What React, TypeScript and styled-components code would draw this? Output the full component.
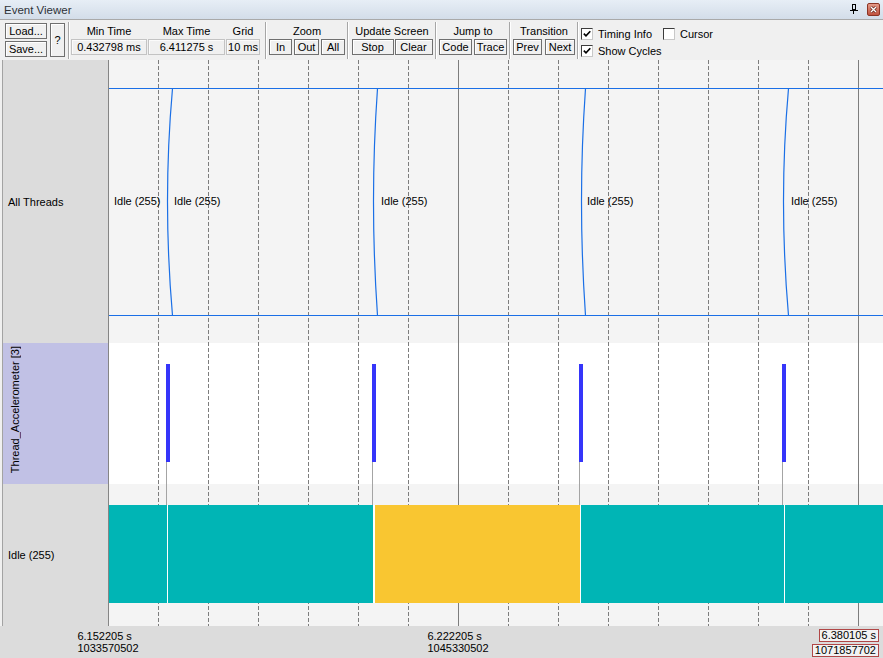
import React from "react";
import styled, { createGlobalStyle } from "styled-components";

const GlobalStyle = createGlobalStyle`
  html, body { margin: 0; padding: 0; background: #f0f0f0; }
  body { font-family: "Liberation Sans", Arial, sans-serif; font-size: 11px; color: #000; }
  #root { width: 883px; height: 658px; overflow: hidden; }
`;

const Window = styled.div`
  width: 883px;
  height: 658px;
  display: flex;
  flex-direction: column;
  background: #f0f0f0;
  overflow: hidden;
`;

/* ---------- Title bar ---------- */
const TitleBar = styled.div`
  flex: none;
  height: 19px;
  display: flex;
  align-items: center;
  padding: 0 3px 0 4px;
  background: linear-gradient(#e7eef6, #d3dde9);
`;
const Title = styled.span`
  font-size: 11.5px;
  color: #2e3238;
  flex: 1;
`;
const PinIcon = styled.svg`
  width: 8px;
  height: 10px;
  margin-right: 9px;
  margin-top: -2px;
`;
const CloseBox = styled.div`
  width: 13px;
  height: 13px;
  box-sizing: border-box;
  border: 1px solid #8c3424;
  border-radius: 2px;
  background: linear-gradient(#e49a88, #c0523f);
  display: flex;
  align-items: center;
  justify-content: center;
`;

/* ---------- Toolbar ---------- */
const Toolbar = styled.div`
  flex: none;
  height: 40px;
  border-top: 1px solid #a9a9a9;
  display: flex;
  align-items: flex-start;
  padding-left: 5px;
`;
const Stack = styled.div`
  display: flex;
  flex-direction: column;
  gap: 2px;
  margin-top: 3px;
`;
const Btn = styled.button<{ $w: number; $h?: number }>`
  box-sizing: border-box;
  width: ${(p) => p.$w}px;
  height: ${(p) => p.$h ?? 16}px;
  margin: 0;
  padding: 0;
  border: 1px solid #6f6f6f;
  box-shadow: inset 1px 1px 0 #ffffff;
  background: #f0f0f0;
  font-family: "Liberation Sans", Arial, sans-serif;
  font-size: 11px;
  color: #000;
  display: flex;
  align-items: center;
  justify-content: center;
  line-height: 1;
`;
const HelpBtn = styled(Btn)`
  margin: 3px 0 0 3px;
`;
const Separator = styled.div<{ $ml?: number }>`
  flex: none;
  width: 0;
  height: 37px;
  margin-top: 2px;
  margin-left: ${(p) => p.$ml ?? 0}px;
  border-left: 1px solid #a6a6a6;
  border-right: 1px solid #ffffff;
`;
const Group = styled.div<{ $w: number }>`
  flex: none;
  width: ${(p) => p.$w}px;
  padding-top: 4px;
  display: flex;
  flex-direction: column;
  align-items: center;
`;
const GroupLabel = styled.div`
  height: 15px;
  line-height: 15px;
  white-space: nowrap;
`;
const BtnRow = styled.div<{ $gap: number }>`
  display: flex;
  gap: ${(p) => p.$gap}px;
`;
const TimeGrid = styled.div`
  flex: none;
  width: 195px;
  padding: 4px 0 0 1px;
  box-sizing: border-box;
  display: grid;
  grid-template-columns: 76px 77px 34px;
  column-gap: 1px;
  grid-template-rows: 15px 16px;
  justify-items: center;
`;
const ValueBox = styled.div`
  box-sizing: border-box;
  width: 100%;
  height: 16px;
  border: 1px solid #c3c3c3;
  box-shadow: inset 1px 1px 0 #fbfbfb;
  display: flex;
  align-items: center;
  justify-content: center;
  white-space: nowrap;
`;
const CheckGrid = styled.div`
  margin-left: 2px;
  padding-top: 8px;
  display: grid;
  grid-template-columns: 71px auto;
  grid-auto-rows: 12px;
  column-gap: 11px;
  row-gap: 5px;
`;
const CheckItem = styled.label`
  display: flex;
  align-items: center;
  gap: 5px;
  white-space: nowrap;
`;
const CheckBox = styled.span`
  flex: none;
  box-sizing: border-box;
  width: 12px;
  height: 12px;
  background: #fff;
  border: 1px solid;
  border-color: #3c3c3c #c8c8c8 #c8c8c8 #3c3c3c;
  display: flex;
  align-items: center;
  justify-content: center;
`;

/* ---------- Chart ---------- */
const ChartArea = styled.div`
  flex: none;
  height: 566px;
  display: flex;
`;
const LabelColumn = styled.div`
  flex: none;
  width: 105px;
  margin-left: 2px;
  border-left: 1px solid #a3a3a3;
  border-right: 1px solid #858585;
  background: #dcdcdc;
  display: flex;
  flex-direction: column;
`;
const LabelRow = styled.div<{ $h: number; $tint?: string }>`
  flex: none;
  height: ${(p) => p.$h}px;
  background: ${(p) => p.$tint ?? "transparent"};
  display: flex;
  align-items: center;
  padding-left: 5px;
  white-space: nowrap;
`;
const VerticalRow = styled(LabelRow)`
  align-items: flex-end;
  padding-left: 6px;
  padding-bottom: 11px;
  box-sizing: border-box;
`;
const VerticalText = styled.span`
  writing-mode: vertical-rl;
  transform: rotate(180deg);
  line-height: 13px;
  white-space: nowrap;
`;
const Plot = styled.svg`
  flex: none;
  display: block;
  width: 774px;
  height: 566px;
  font-family: "Liberation Sans", Arial, sans-serif;
  font-size: 11px;
`;

/* ---------- Axis ---------- */
const Axis = styled.div`
  flex: none;
  height: 32px;
  background: #dcdcdc;
  position: relative;
  display: flex;
  justify-content: flex-end;
  padding-right: 4px;
`;
const TickLabel = styled.div`
  position: absolute;
  top: 4px;
  transform: translateX(-50%);
  line-height: 12px;
  white-space: nowrap;
`;
const MarkerStack = styled.div`
  display: flex;
  flex-direction: column;
  align-items: flex-end;
  gap: 2px;
  padding-top: 3px;
`;
const MarkerBox = styled.div`
  border: 1px solid #b04646;
  background: #f2f2f2;
  padding: 0 2px;
  line-height: 11px;
  white-space: nowrap;
`;

/* ---------- Data ---------- */
const W = 774;
const H = 566;
const T0 = 6.152205;
const PX_PER_S = 50 / 0.01;
const gridXs = Array.from({ length: 15 }, (_, k) => 49 + 50 * k);
const solidXs = [349, 749];
const transitions = [
  { top: 63, mid: 58 },
  { top: 268, mid: 264 },
  { top: 476, mid: 472 },
  { top: 679, mid: 674 },
];
const idleLabels = [5, 65, 272, 478, 682];
const bars = [57, 263, 470, 673];
const segments = [
  { x0: 0, x1: 58, c: "#00b5b5" },
  { x0: 59, x1: 264, c: "#00b5b5" },
  { x0: 266, x1: 471, c: "#f9c631" },
  { x0: 472, x1: 675, c: "#00b5b5" },
  { x0: 676, x1: 774, c: "#00b5b5" },
];
const ticks = [
  { t: 6.152205, cyc: "1033570502" },
  { t: 6.222205, cyc: "1045330502" },
];

const Check = () => (
  <svg width="8" height="8" viewBox="0 0 8 8">
    <path d="M0.8 3.6 L3 5.9 L7.3 1.2" fill="none" stroke="#000" strokeWidth="1.6" />
  </svg>
);

export default function App() {
  return (
    <Window>
      <GlobalStyle />
      <TitleBar>
        <Title>Event Viewer</Title>
        <PinIcon viewBox="0 0 8 10">
          <rect x="2.5" y="0.5" width="3" height="5" fill="none" stroke="#000" />
          <rect x="5" y="0" width="1" height="6" fill="#000" />
          <line x1="0" y1="6.5" x2="8" y2="6.5" stroke="#000" />
          <line x1="3.5" y1="6.5" x2="3.5" y2="10" stroke="#000" />
        </PinIcon>
        <CloseBox>
          <svg width="9" height="9" viewBox="0 0 9 9">
            <path d="M2 2 L7 7 M7 2 L2 7" stroke="#5a1a10" strokeWidth="2.6" />
            <path d="M2 2 L7 7 M7 2 L2 7" stroke="#fff" strokeWidth="1.4" />
          </svg>
        </CloseBox>
      </TitleBar>

      <Toolbar>
        <Stack>
          <Btn $w={42}>Load...</Btn>
          <Btn $w={42}>Save...</Btn>
        </Stack>
        <HelpBtn $w={15} $h={34}>?</HelpBtn>
        <Separator $ml={3} />
        <TimeGrid>
          <GroupLabel>Min Time</GroupLabel>
          <GroupLabel>Max Time</GroupLabel>
          <GroupLabel>Grid</GroupLabel>
          <ValueBox>0.432798 ms</ValueBox>
          <ValueBox>6.411275 s</ValueBox>
          <ValueBox>10 ms</ValueBox>
        </TimeGrid>
        <Separator />
        <Group $w={80}>
          <GroupLabel>Zoom</GroupLabel>
          <BtnRow $gap={2}>
            <Btn $w={23}>In</Btn>
            <Btn $w={25}>Out</Btn>
            <Btn $w={24}>All</Btn>
          </BtnRow>
        </Group>
        <Separator />
        <Group $w={86}>
          <GroupLabel>Update Screen</GroupLabel>
          <BtnRow $gap={1}>
            <Btn $w={42}>Stop</Btn>
            <Btn $w={38}>Clear</Btn>
          </BtnRow>
        </Group>
        <Separator />
        <Group $w={72}>
          <GroupLabel>Jump to</GroupLabel>
          <BtnRow $gap={2}>
            <Btn $w={33}>Code</Btn>
            <Btn $w={33}>Trace</Btn>
          </BtnRow>
        </Group>
        <Separator />
        <Group $w={66}>
          <GroupLabel>Transition</GroupLabel>
          <BtnRow $gap={3}>
            <Btn $w={29}>Prev</Btn>
            <Btn $w={30}>Next</Btn>
          </BtnRow>
        </Group>
        <Separator />
        <CheckGrid>
          <CheckItem>
            <CheckBox>
              <Check />
            </CheckBox>
            Timing Info
          </CheckItem>
          <CheckItem>
            <CheckBox />
            Cursor
          </CheckItem>
          <CheckItem>
            <CheckBox>
              <Check />
            </CheckBox>
            Show Cycles
          </CheckItem>
        </CheckGrid>
      </Toolbar>

      <ChartArea>
        <LabelColumn>
          <LabelRow $h={283}>All Threads</LabelRow>
          <VerticalRow $h={141} $tint="#c1c1e5">
            <VerticalText>Thread_Accelerometer [3]</VerticalText>
          </VerticalRow>
          <LabelRow $h={142}>Idle (255)</LabelRow>
        </LabelColumn>

        <Plot viewBox={`0 0 ${W} ${H}`}>
          <rect x="0" y="0" width={W} height={H} fill="#f4f4f4" />
          <rect x="0" y="283" width={W} height="141" fill="#ffffff" />
          {gridXs.map((x) => (
            <line
              key={x}
              x1={x + 0.5}
              y1="0"
              x2={x + 0.5}
              y2={H}
              stroke="#7d7d7d"
              strokeWidth="1"
              strokeDasharray={solidXs.includes(x) ? undefined : "4 2"}
            />
          ))}
          <line x1="0" y1="28.5" x2={W} y2="28.5" stroke="#1a6fe6" />
          <line x1="0" y1="255.5" x2={W} y2="255.5" stroke="#1a6fe6" />
          {transitions.map((t) => (
            <path
              key={t.top}
              d={`M${t.top + 0.5} 28.5 Q${2 * t.mid - t.top + 0.5} 141 ${t.top + 0.5} 255.5`}
              fill="none"
              stroke="#1a6fe6"
              strokeWidth="1.2"
            />
          ))}
          {idleLabels.map((x) => (
            <text key={x} x={x} y="145" fill="#000">
              Idle (255)
            </text>
          ))}
          {bars.map((x) => (
            <g key={x}>
              <line x1={x + 0.5} y1="402" x2={x + 0.5} y2="445" stroke="#a4a4a4" />
              <rect x={x} y="304" width="4" height="98" fill="#3535fa" />
            </g>
          ))}
          <rect x="0" y="445" width={W} height="98" fill="#ffffff" />
          {segments.map((s) => (
            <rect key={s.x0} x={s.x0} y="445" width={s.x1 - s.x0} height="98" fill={s.c} />
          ))}
        </Plot>
      </ChartArea>

      <Axis>
        {ticks.map((tk) => (
          <TickLabel key={tk.cyc} style={{ left: 108 + (tk.t - T0) * PX_PER_S }}>
            <div>{tk.t.toFixed(6)} s</div>
            <div>{tk.cyc}</div>
          </TickLabel>
        ))}
        <MarkerStack>
          <MarkerBox>6.380105 s</MarkerBox>
          <MarkerBox>1071857702</MarkerBox>
        </MarkerStack>
      </Axis>
    </Window>
  );
}
